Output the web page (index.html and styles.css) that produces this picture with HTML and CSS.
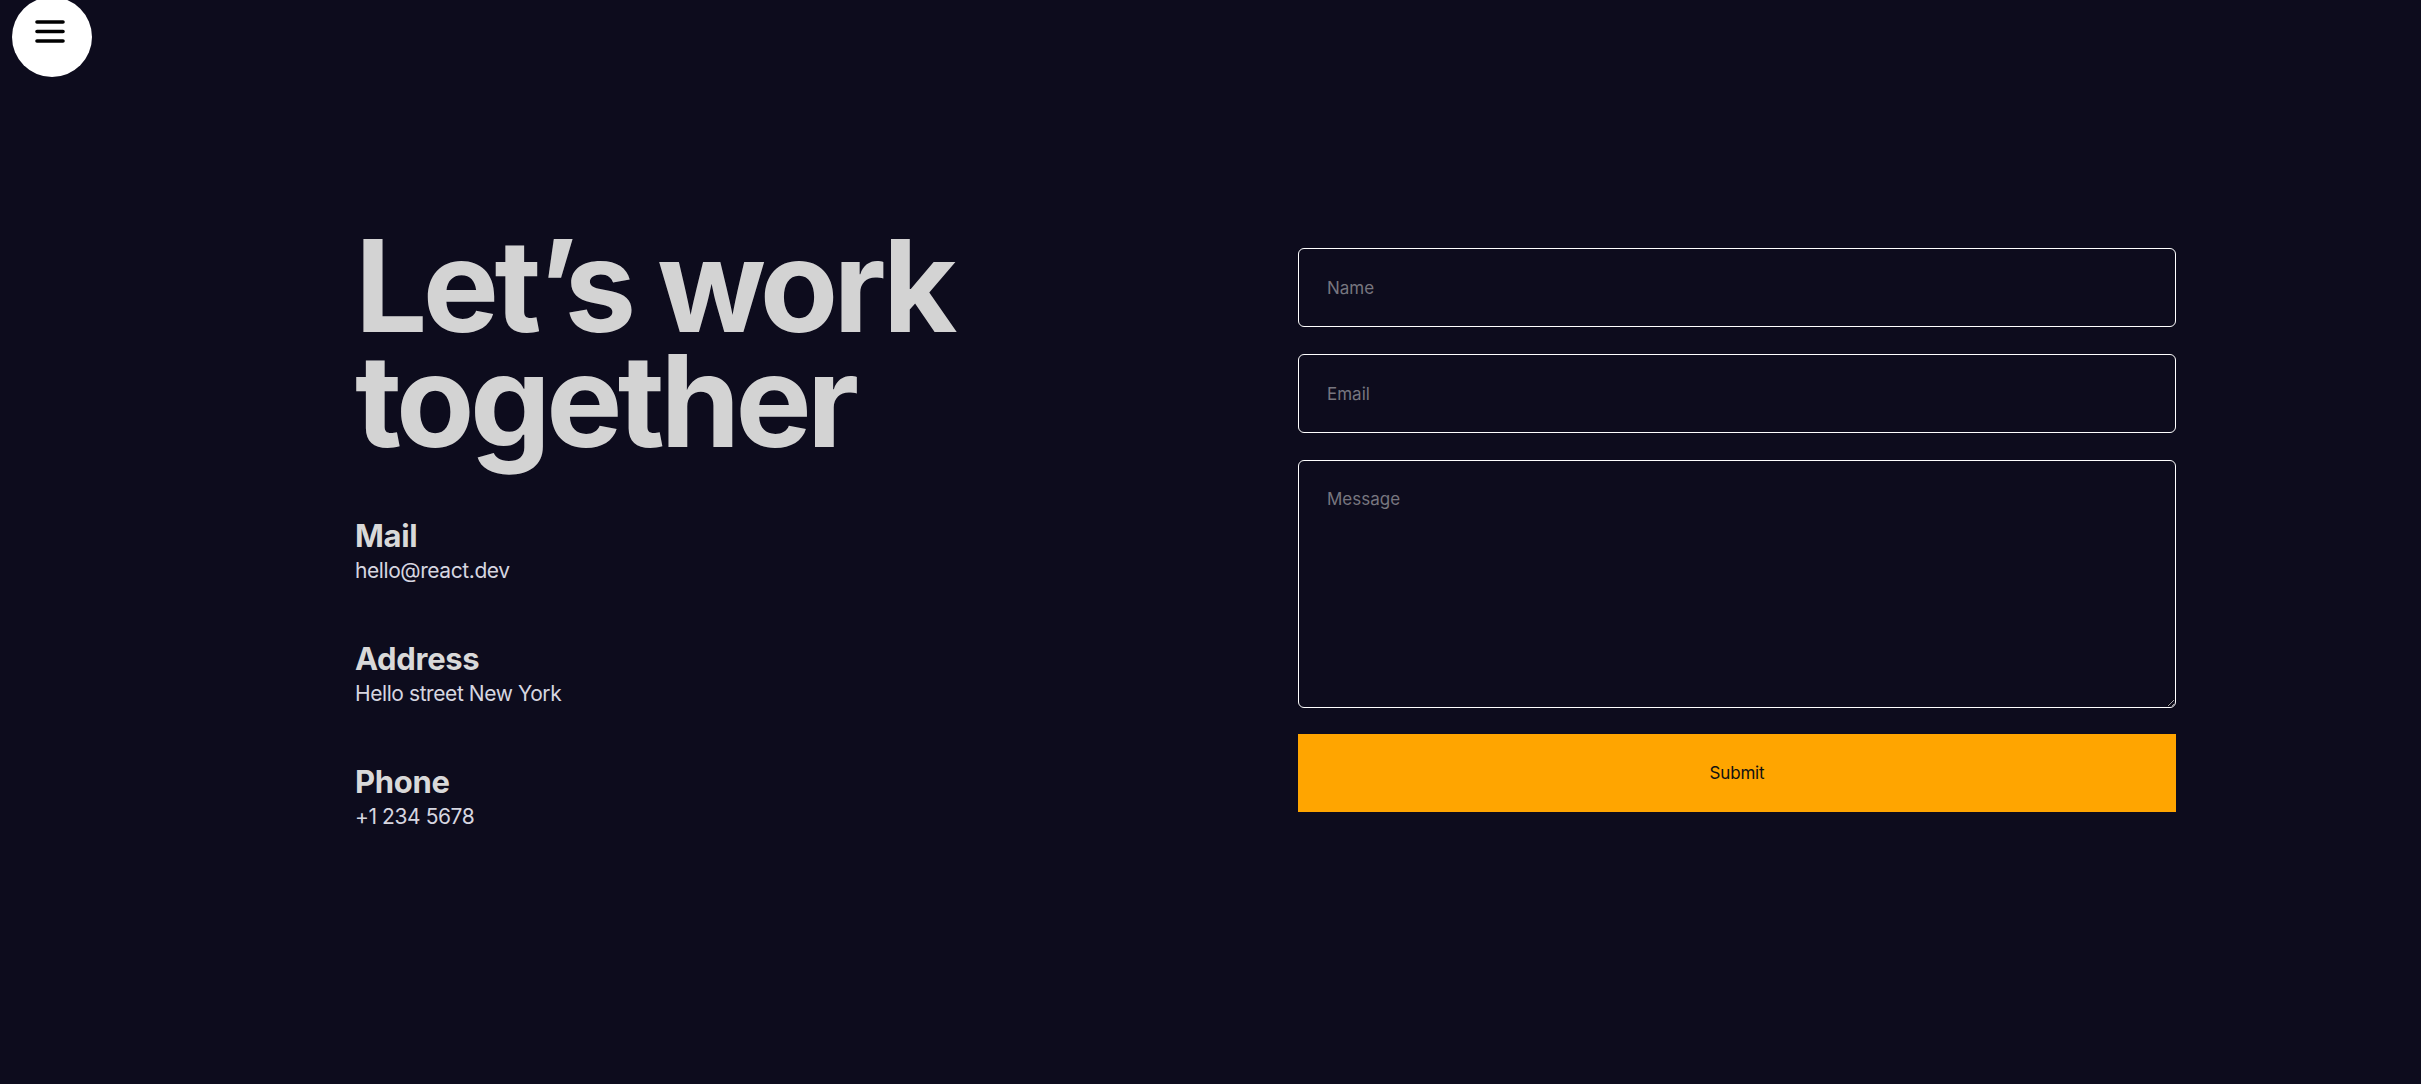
FILE: index.html
```html
<!DOCTYPE html>
<html lang="en">
<head>
<meta charset="utf-8">
<title>Contact</title>
<link rel="stylesheet" href="styles.css">
</head>
<body>
<button class="menu-btn" aria-label="Menu">
  <svg class="menu-icon" width="30" height="24" viewBox="0 0 30 24">
    <path d="M2 3H28M2 12.5H28M2 22H28" stroke="#000" stroke-width="3.6" stroke-linecap="round" fill="none"/>
  </svg>
</button>
<main class="contact">
  <section class="info">
    <h1 class="title">Let’s work together</h1>
    <div class="item">
      <h2 class="item-title">Mail</h2>
      <p class="item-text">hello@react.dev</p>
    </div>
    <div class="item">
      <h2 class="item-title">Address</h2>
      <p class="item-text">Hello street New York</p>
    </div>
    <div class="item">
      <h2 class="item-title">Phone</h2>
      <p class="item-text">+1 234 5678</p>
    </div>
  </section>
  <form class="form">
    <input class="field" type="text" placeholder="Name">
    <input class="field" type="email" placeholder="Email">
    <textarea class="field area" placeholder="Message"></textarea>
    <button class="submit" type="button">Submit</button>
  </form>
</main>
</body>
</html>
```
FILE: styles.css
```css
* { box-sizing: border-box; }
html, body { margin: 0; padding: 0; }
body {
  background: #0d0c1d;
  color: #d3d3d3;
  font-family: Inter, "Noto Sans", sans-serif;
  height: 1084px;
  overflow: hidden;
}
.menu-btn {
  position: absolute;
  left: 12px;
  top: -3px;
  width: 80px;
  height: 80px;
  border-radius: 50%;
  background: #fff;
  border: none;
  padding: 0;
  cursor: pointer;
}
.menu-icon {
  position: absolute;
  left: 23px;
  top: 22px;
}
.contact {
  display: flex;
  justify-content: space-between;
  align-items: flex-start;
  padding: 228px 245px 0 355px;
}
.info { width: 700px; }
.title {
  margin: 0 0 59px;
  font-size: 128px;
  line-height: 115px;
  font-weight: 700;
  letter-spacing: -0.036em;
  color: #d3d3d3;
}
.item { margin-bottom: 56px; }
.item-title {
  margin: 0;
  font-size: 31px;
  line-height: 38px;
  font-weight: 700;
  letter-spacing: -0.01em;
  color: #d9d9d9;
}
.item-text {
  margin: 3px 0 0;
  font-size: 21px;
  line-height: 26px;
  font-weight: 400;
  letter-spacing: -0.02em;
  color: #d6d6e0;
}
.form {
  width: 878px;
  margin-top: 20px;
  display: flex;
  flex-direction: column;
  gap: 27px;
}
.field {
  display: block;
  width: 100%;
  height: 79px;
  padding: 28px;
  background: transparent;
  border: 1px solid #fff;
  border-radius: 6px;
  color: #fff;
  font-family: Inter, "Noto Sans", sans-serif;
  font-size: 17px;
  line-height: 21px;
  outline: none;
}
.field::placeholder { color: #77767f; }
.area {
  height: 248px;
  resize: vertical;
}
.submit {
  display: block;
  width: 100%;
  height: 78px;
  margin-top: -1px;
  background: #ffa500;
  border: none;
  color: #111;
  font-family: Inter, "Noto Sans", sans-serif;
  font-size: 17px;
  letter-spacing: -0.01em;
  cursor: pointer;
}
```
